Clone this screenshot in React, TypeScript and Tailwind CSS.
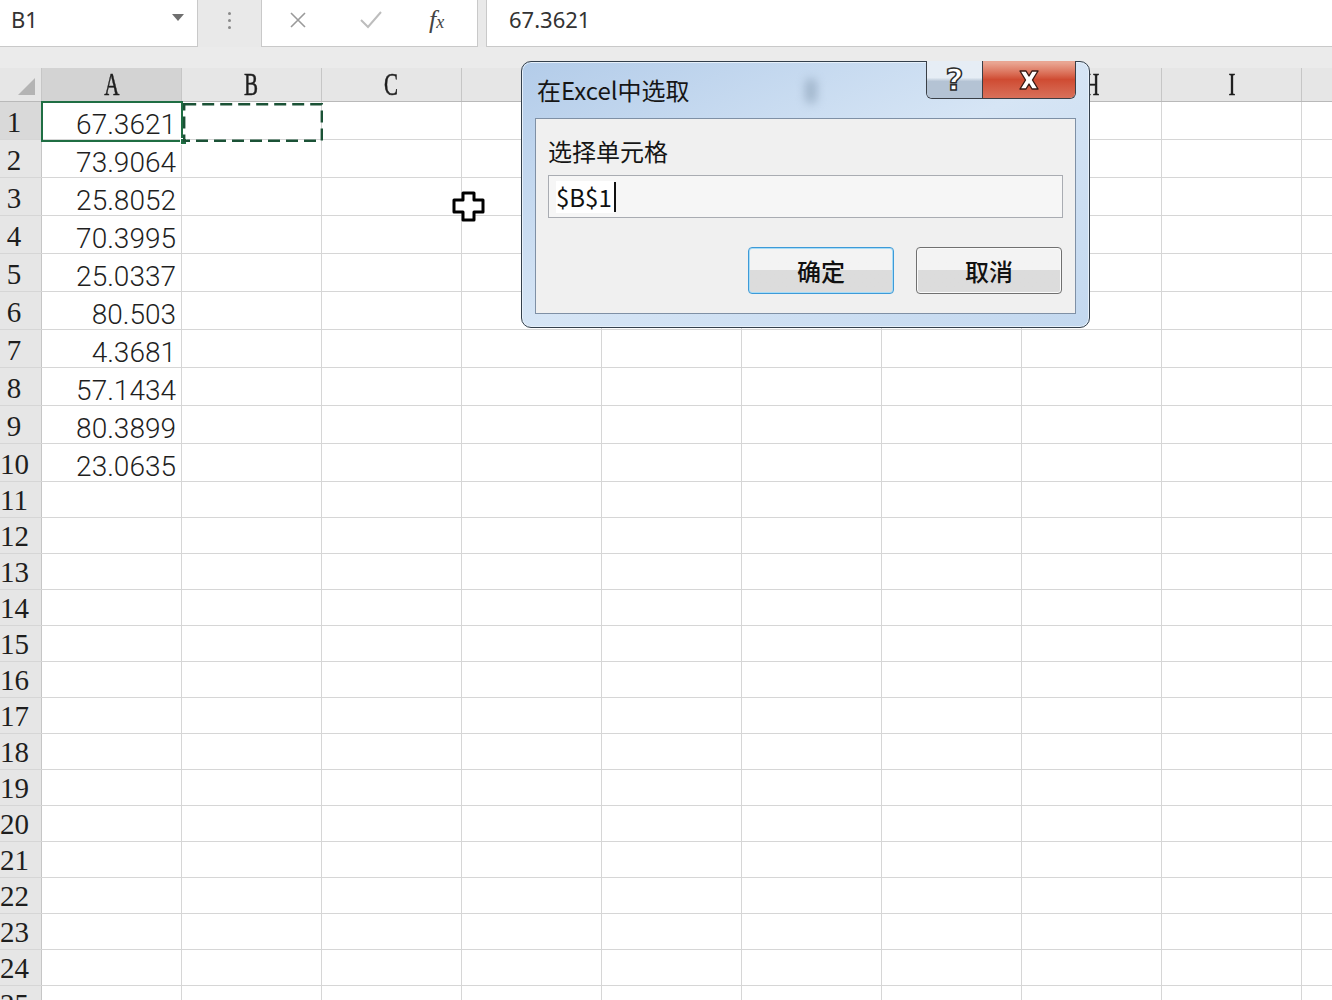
import type { ReactNode } from 'react'

const columns = ['A', 'B', 'C', 'D', 'E', 'F', 'G', 'H', 'I', 'J']

const values = [
  '67.3621',
  '73.9064',
  '25.8052',
  '70.3995',
  '25.0337',
  '80.503',
  '4.3681',
  '57.1434',
  '80.3899',
  '23.0635',
]

const rowCount = 25

function FormulaBar() {
  return (
    <div className="flex h-[47px] bg-[#e9e9e9] font-['Noto_Sans',sans-serif] text-[#333]">
      <div className="relative flex w-[198px] items-center border-r border-b border-[#c9c9c9] bg-white pb-[7px] pl-[11px] text-[22px]">
        B1
        <span className="absolute right-[13px] top-[14px] h-0 w-0 border-x-[6px] border-t-[7px] border-x-transparent border-t-[#6f6f6f]" />
      </div>
      <div className="flex w-[63px] flex-col items-center justify-center gap-[4px] pb-[7px]">
        <span className="h-[3px] w-[3px] rounded-full bg-[#8a8a8a]" />
        <span className="h-[3px] w-[3px] rounded-full bg-[#8a8a8a]" />
        <span className="h-[3px] w-[3px] rounded-full bg-[#8a8a8a]" />
      </div>
      <div className="flex w-[217px] items-center border-x border-b border-[#c9c9c9] bg-white pb-[7px]">
        <svg className="ml-[26px]" width="20" height="20" viewBox="0 0 20 20">
          <path d="M3 3 L17 17 M17 3 L3 17" stroke="#9a9a9a" strokeWidth="1.6" fill="none" />
        </svg>
        <svg className="ml-[51px]" width="24" height="20" viewBox="0 0 24 20">
          <path d="M2 10 L9 17 L22 2" stroke="#bdbdbd" strokeWidth="2" fill="none" />
        </svg>
        <span className="ml-[46px] font-['Liberation_Serif',serif] text-[26px] italic leading-none text-[#444]">
          f<span className="text-[18px]">x</span>
        </span>
      </div>
      <div className="w-[8px]" />
      <div className="flex flex-1 items-center border-l border-b border-[#c9c9c9] bg-white pb-[7px] pl-[22px] text-[22px]">
        67.3621
      </div>
    </div>
  )
}

function HeaderRow() {
  return (
    <div className="flex h-[34px] border-b border-[#b9b9b9] bg-[#e6e6e6]">
      <div className="relative w-[42px] shrink-0 border-r border-[#c6c6c6]">
        <svg className="absolute bottom-[6px] right-[6px]" width="17" height="17" viewBox="0 0 17 17">
          <path d="M17 0 L17 17 L0 17 Z" fill="#b4b4b4" />
        </svg>
      </div>
      {columns.map((col) => (
        <div
          key={col}
          className={`flex w-[140px] shrink-0 items-end justify-center border-r border-[#c6c6c6] pb-[1px] font-['Liberation_Serif',serif] text-[30px] leading-[30px] text-[#1e1e1e] [-webkit-text-stroke:0.5px_#1e1e1e] ${
            col === 'A' ? 'bg-[#d3d3d3]' : ''
          }`}
        >
          <span className="inline-block scale-x-[0.7] scale-y-[1.05]">{col}</span>
        </div>
      ))}
    </div>
  )
}

function SheetRow({ index }: { index: number }) {
  const value = values[index]
  const height = index < 10 ? 'h-[38px]' : 'h-[36px]'

  return (
    <div className={`flex ${height} border-b border-[#d6d6d6]`}>
      <div
        className={`flex w-[42px] shrink-0 items-end border-r border-[#c6c6c6] pb-[2px] font-['Liberation_Serif',serif] text-[29px] leading-[30px] text-[#1e1e1e] ${
          index === 0 ? 'bg-[#d9d9d9]' : 'bg-[#e6e6e6]'
        }`}
      >
        <span className="inline-block w-[28px] text-center">{index + 1}</span>
      </div>
      {columns.map((col) => (
        <div
          key={col}
          className="flex w-[140px] shrink-0 items-end justify-end border-r border-[#d6d6d6] bg-white pr-[5px]"
        >
          {col === 'A' && value ? (
            <span className="font-['Roboto',sans-serif] text-[28px] font-light leading-[28px] text-[#1f1f1f]">
              {value}
            </span>
          ) : null}
        </div>
      ))}
    </div>
  )
}

function DialogButton({ children, primary }: { children: ReactNode; primary?: boolean }) {
  return (
    <button
      type="button"
      className={`flex h-[47px] w-[146px] items-center justify-center rounded-[4px] border bg-gradient-to-b from-[#f3f3f3] from-50% to-[#dcdcdc] to-50% text-[24px] font-medium text-[#111] ${
        primary
          ? 'border-[#3d9ad8] shadow-[inset_0_0_0_1px_#a8dcf6]'
          : 'border-[#707070] shadow-[inset_0_0_0_1px_#fafafa]'
      }`}
    >
      {children}
    </button>
  )
}

function SelectDialog() {
  return (
    <div className="absolute left-[521px] top-[61px] flex h-[267px] w-[569px] flex-col rounded-[10px] border border-[#34404c] bg-gradient-to-br from-[#b3cce9] via-[#d6e5f5] to-[#c3d8ef] font-['Noto_Sans_CJK_SC',sans-serif] shadow-[inset_0_0_0_1px_#e6f0fa]">
      <div className="relative h-[56px] shrink-0">
        <span className="absolute left-[15px] top-[12px] text-[24px] leading-[32px] text-[#161616]">
          在Excel中选取
        </span>
        <span className="absolute left-[283px] top-[16px] h-[26px] w-[12px] rounded-full bg-[#7d93aa] opacity-50 blur-[5px]" />
        <div className="absolute right-[13px] top-[-1px] flex h-[38px] overflow-hidden rounded-b-[6px] border border-t-0 border-[#3a3f46]">
          <div className="flex w-[56px] items-center justify-center border-r border-[#3a3f46] bg-gradient-to-b from-[#e6edf5] from-45% to-[#b4c3d4] to-55%">
            <span className="font-['DejaVu_Sans',sans-serif] text-[31px] font-bold leading-none text-white [-webkit-text-stroke:1.5px_#2c2c2c]">
              ?
            </span>
          </div>
          <div className="flex w-[92px] items-center justify-center bg-gradient-to-b from-[#e9a592] from-5% via-[#cf4b32] via-50% to-[#d8705a]">
            <svg width="26" height="24" viewBox="0 0 26 24">
              <path
                d="M4 3 H10 L13 8 L16 3 H22 L16.5 12 L22 21 H16 L13 16 L10 21 H4 L9.5 12 Z"
                fill="white"
                stroke="#3a1a14"
                strokeWidth="1.4"
                strokeLinejoin="round"
              />
            </svg>
          </div>
        </div>
      </div>
      <div className="mx-[13px] mb-[13px] flex flex-1 flex-col border border-[#7f90a5] bg-[#f0f0f0] px-[12px] pt-[17px]">
        <div className="text-[24px] leading-[30px] text-[#151515]">选择单元格</div>
        <div className="mt-[9px] flex h-[43px] items-center border border-[#a9acb2] bg-[#f6f6f6] pl-[7px]">
          <span className="bg-white pr-[2px] text-[24px] leading-[32px] text-[#111]">$B$1</span>
          <span className="h-[30px] w-[2px] bg-[#111]" />
        </div>
        <div className="mt-[29px] flex justify-end gap-[22px] pr-[1px]">
          <DialogButton primary>确定</DialogButton>
          <DialogButton>取消</DialogButton>
        </div>
      </div>
    </div>
  )
}

export default function App() {
  return (
    <div className="relative h-[1000px] w-[1332px] overflow-hidden bg-white">
      <FormulaBar />
      <div className="h-[21px] bg-[#ebebeb]" />
      <HeaderRow />
      {Array.from({ length: rowCount }, (_, i) => (
        <SheetRow key={i} index={i} />
      ))}

      {/* active cell A1 */}
      <div className="pointer-events-none absolute left-[41px] top-[101px] h-[41px] w-[142px] border-2 border-[#1f6e43]" />
      <div className="pointer-events-none absolute left-[180px] top-[138px] h-[7px] w-[7px] border border-white bg-[#1f6e43]" />

      {/* copy marquee on B1 */}
      <svg className="pointer-events-none absolute left-[183px] top-[103px]" width="140" height="39" viewBox="0 0 140 39">
        <rect x="1.2" y="1.2" width="137.6" height="36.6" fill="none" stroke="#1b5236" strokeWidth="2.4" strokeDasharray="12 6" />
      </svg>

      <SelectDialog />

      {/* move cursor */}
      <svg className="pointer-events-none absolute left-[452px] top-[191px]" width="34" height="32" viewBox="0 0 34 32">
        <path
          d="M11 2 H22 V9 H31 V21 H22 V29 H11 V21 H2 V9 H11 Z"
          fill="white"
          stroke="black"
          strokeWidth="3"
          strokeLinejoin="round"
        />
      </svg>
    </div>
  )
}
